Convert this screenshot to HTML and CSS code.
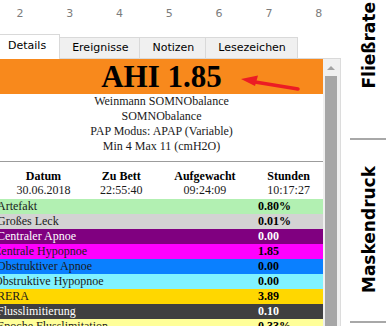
FILE: index.html
```html
<!DOCTYPE html>
<html lang="de">
<head>
<meta charset="utf-8">
<title>Details</title>
<link rel="stylesheet" href="styles.css">
</head>
<body>
<div class="screen">
  <div class="main">
    <div class="axis">
      <span>2</span><span>3</span><span>4</span><span>5</span><span>6</span><span>7</span><span>8</span>
    </div>
    <div class="tabs">
      <div class="tab active">Details</div>
      <div class="tab">Ereignisse</div>
      <div class="tab">Notizen</div>
      <div class="tab">Lesezeichen</div>
    </div>
    <div class="panel">
      <div class="content">
        <div class="ahi">AHI 1.85</div>
        <div class="info">
          <div>Weinmann SOMNObalance</div>
          <div>SOMNObalance</div>
          <div>PAP Modus: APAP (Variable)</div>
          <div>Min 4 Max 11 (cmH2O)</div>
        </div>
        <div class="sep"></div>
        <table class="summary">
          <tr><th>Datum</th><th>Zu Bett</th><th>Aufgewacht</th><th>Stunden</th></tr>
          <tr><td>30.06.2018</td><td>22:55:40</td><td>09:24:09</td><td>10:17:27</td></tr>
        </table>
        <div class="events">
          <div class="ev ev-artefakt"><span class="lbl">Artefakt</span><span class="val">0.80%</span></div>
          <div class="ev ev-leck"><span class="lbl">Großes Leck</span><span class="val">0.01%</span></div>
          <div class="ev ev-ca dark"><span class="lbl">Centraler Apnoe</span><span class="val">0.00</span></div>
          <div class="ev ev-ch"><span class="lbl deep">Zentrale Hypopnoe</span><span class="val">1.85</span></div>
          <div class="ev ev-oa"><span class="lbl">Obstruktiver Apnoe</span><span class="val">0.00</span></div>
          <div class="ev ev-oh"><span class="lbl deep">Obstruktive Hypopnoe</span><span class="val">0.00</span></div>
          <div class="ev ev-rera"><span class="lbl">RERA</span><span class="val">3.89</span></div>
          <div class="ev ev-fl dark"><span class="lbl">Flusslimitierung</span><span class="val">0.10</span></div>
          <div class="ev ev-efl"><span class="lbl">Epoche Flusslimitation</span><span class="val">0.33%</span></div>
        </div>
      </div>
      <div class="scrollbar">
        <div class="sb-up"></div>
        <div class="sb-thumb"></div>
      </div>
    </div>
  </div>
  <div class="side">
    <div class="chart chart-flow"><span class="vlabel">Fließrate</span></div>
    <div class="chart chart-mask"><span class="vlabel">Maskendruck</span></div>
    <div class="chart chart-next"></div>
  </div>
  <svg class="annot" width="386" height="326" viewBox="0 0 386 326">
    <line x1="255" y1="82" x2="298" y2="89" stroke="#ec1c24" stroke-width="3.5" stroke-linecap="round"/>
    <polygon points="241,79 258,75.5 255,86" fill="#ec1c24"/>
  </svg>
</div>
</body>
</html>
```
FILE: styles.css
```css
* { box-sizing: border-box; }
html, body { margin: 0; padding: 0; background: #fff; }
body { width: 386px; height: 326px; overflow: hidden; }

.screen {
  position: relative;
  display: flex;
  width: 386px;
  height: 326px;
  overflow: hidden;
}

.main {
  width: 341px;
  flex: none;
  display: flex;
  flex-direction: column;
}

.axis {
  height: 34px;
  display: flex;
  margin-left: -5px;
  padding-top: 7px;
  font-family: "DejaVu Sans", sans-serif;
  font-size: 11px;
  color: #7c7c7c;
}
.axis span { width: 49.8px; text-align: center; flex: none; }

.tabs {
  height: 24px;
  display: flex;
  align-items: flex-end;
  margin-left: -4px;
  font-family: "DejaVu Sans", sans-serif;
  font-size: 11px;
  color: #000;
}
.tab {
  height: 21px;
  line-height: 19px;
  padding: 0 11px 0 12px;
  background: #f0f0f0;
  border: 1px solid #d9d9d9;
  border-bottom: none;
  margin-left: -1px;
}
.tab.active {
  height: 25px;
  line-height: 22px;
  background: #fff;
  margin-bottom: -1px;
  position: relative;
  z-index: 1;
  padding: 0 13px 0 12px;
}

.panel {
  flex: 1;
  display: flex;
  border-top: 1px solid #d9d9d9;
  border-right: 1px solid #dcdcdc;
  min-height: 0;
}

.content {
  width: 323px;
  flex: none;
  overflow: hidden;
  font-family: "Liberation Serif", "Times New Roman", serif;
  font-size: 12px;
  color: #1a1a1a;
}

.ahi {
  height: 35px;
  background: #f8891c;
  text-align: center;
  font-weight: bold;
  font-size: 31px;
  line-height: 36px;
  color: #000;
}

.info {
  text-align: center;
  line-height: 15px;
}

.sep {
  margin-top: 7px;
  height: 1px;
  background: #9c9c9c;
}

.summary {
  width: 100%;
  border-collapse: collapse;
  margin-top: 7px;
  margin-bottom: 2px;
  line-height: 14px;
}
.summary th, .summary td {
  padding: 0;
  text-align: center;
  font-size: 12px;
}
.summary th { font-weight: bold; color: #000; }

.ev {
  height: 15px;
  line-height: 15px;
  display: flex;
  white-space: nowrap;
  overflow: hidden;
}
.lbl {
  width: 258px;
  flex: none;
  text-indent: -3px;
  overflow: hidden;
}
.lbl.deep { text-indent: -6px; }
.val { font-weight: bold; color: #000; }
.dark .lbl, .dark .val { color: #fff; }

.ev-artefakt { background: #b2f0b2; }
.ev-leck { background: #d3d3d3; }
.ev-ca { background: #800080; }
.ev-ch { background: #ff00ff; }
.ev-oa { background: #0a80ff; }
.ev-oh { background: #80f2ff; }
.ev-rera { background: #ffd700; }
.ev-fl { background: #404040; }
.ev-efl { background: #ffff99; }

.scrollbar {
  width: 17px;
  flex: none;
  background: #f0f0f0;
  display: flex;
  flex-direction: column;
  align-items: flex-start;
  padding-left: 2px;
}
.sb-up {
  width: 0;
  height: 0;
  margin: 7px 0 0 2px;
  border-left: 4px solid transparent;
  border-right: 4px solid transparent;
  border-bottom: 4px solid #a3a3a3;
}
.sb-thumb {
  margin-top: 6px;
  width: 12px;
  flex: 1;
  background: #a6a6a6;
}

.side {
  flex: 1;
  display: flex;
  flex-direction: column;
  font-family: "DejaVu Sans", sans-serif;
  font-weight: bold;
  color: #000;
}
.chart {
  margin-left: 9px;
  border-bottom: 2px solid #a8a8a8;
  display: flex;
  justify-content: center;
  align-items: flex-start;
}
.chart-flow { height: 140px; padding-top: 2px; padding-left: 2px; }
.chart-mask { height: 183px; padding-top: 26px; padding-left: 2px; }
.chart-next { flex: 1; border-bottom: none; }
.vlabel {
  writing-mode: vertical-rl;
  transform: rotate(180deg);
  font-size: 17px;
  line-height: 21px;
  white-space: nowrap;
}

.annot {
  position: absolute;
  left: 0;
  top: 0;
  pointer-events: none;
}
```
